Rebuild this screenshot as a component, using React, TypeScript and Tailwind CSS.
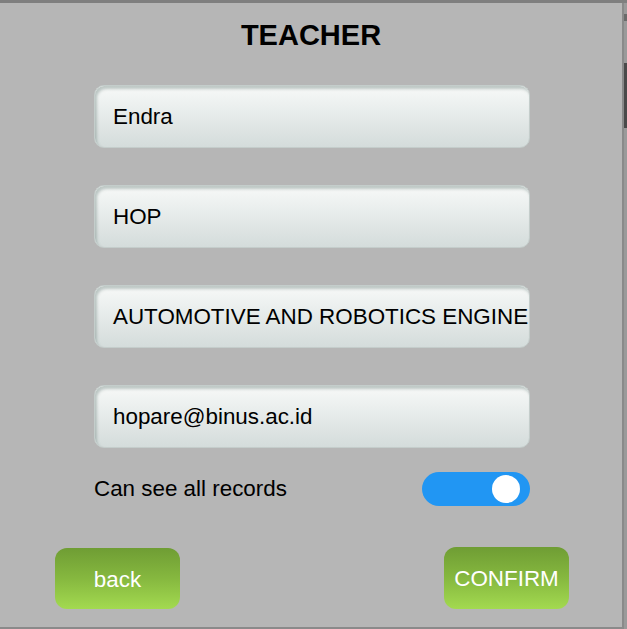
import React from "react";

const Field = ({ value }: { value: string }) => (
  <div className="h-[63px] w-[436px] rounded-[10px] border border-[#c4cdcb] bg-gradient-to-b from-[#f7f9f8] to-[#d4dcdb] shadow-[inset_2px_3px_3px_rgba(120,140,135,0.45)] flex items-center pl-[18px] pt-[2px] overflow-hidden whitespace-nowrap">
    <span className="text-[22.4px] text-black leading-none">{value}</span>
  </div>
);

export default function App() {
  return (
    <div
      className="w-[627px] h-[629px] bg-[#b6b6b6] flex flex-col overflow-hidden"
      style={{ fontFamily: '"Liberation Sans", Arial, sans-serif' }}
    >
      <div className="h-[3px] bg-[#7f7f7f] shrink-0" />
      <div className="flex flex-1 min-h-0">
        <div className="flex-1 flex flex-col border-r-2 border-[#8a8a8a] border-b-2">
          <h1 className="text-center font-bold text-[29px] leading-none mt-[18px] text-black">TEACHER</h1>
          <div className="flex flex-col gap-[37px] ml-[94px] mt-[35px]">
            <Field value="Endra" />
            <Field value="HOP" />
            <Field value="AUTOMOTIVE AND ROBOTICS ENGINEERING" />
            <Field value="hopare@binus.ac.id" />
          </div>
          <div className="flex items-center justify-between ml-[94px] w-[436px] mt-[24px]">
            <span className="text-[22.4px] text-black">Can see all records</span>
            <div className="w-[108px] h-[34px] rounded-full bg-[#2196f3] flex items-center justify-end pr-[10px]">
              <div className="w-[28px] h-[28px] rounded-full bg-white" />
            </div>
          </div>
          <div className="flex justify-between ml-[55px] w-[514px] mt-[42px]">
            <button className="w-[125px] h-[61px] pt-[2px] rounded-[12px] bg-gradient-to-b from-[#6f9d34] via-[#86b83f] to-[#a3da50] text-white text-[22.4px]">back</button>
            <button className="w-[125px] h-[62px] pt-[2px] -mt-px rounded-[12px] bg-gradient-to-b from-[#6f9d34] via-[#86b83f] to-[#a3da50] text-white text-[22.4px]">CONFIRM</button>
          </div>
        </div>
        <div className="w-[3px] bg-[#9a9a9a] flex flex-col">
          <div className="h-[11px]" />
          <div className="h-[7px] bg-[#6a6a6a]" />
          <div className="h-[42px]" />
          <div className="h-[65px] bg-[#4a4a4a]" />
        </div>
      </div>
    </div>
  );
}
